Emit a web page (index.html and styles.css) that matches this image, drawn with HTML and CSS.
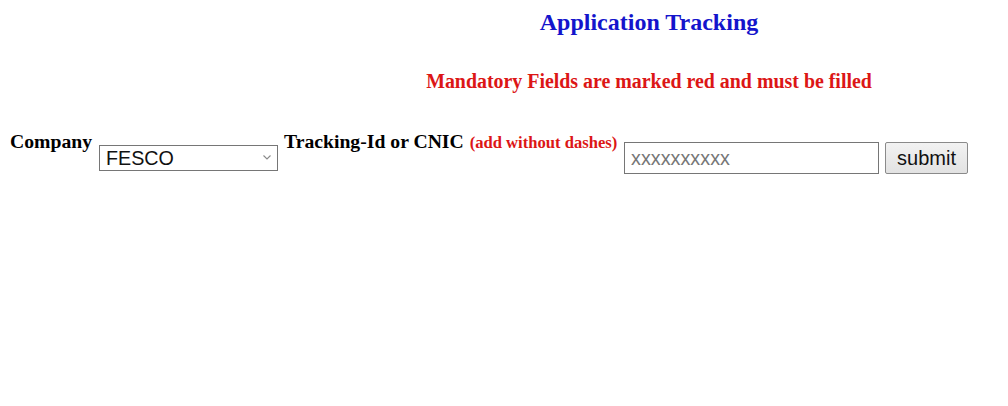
FILE: index.html
```html
<!DOCTYPE html>
<html>
<head>
<meta charset="utf-8">
<title>Application Tracking</title>
<link rel="stylesheet" href="styles.css">
</head>
<body>
<div class="page">
  <header class="head">
    <h2 class="title">Application Tracking</h2>
    <h3 class="notice">Mandatory Fields are marked red and must be filled</h3>
  </header>
  <form class="row">
    <label class="label label-company">Company</label>
    <div class="select-wrap">
      <select class="select">
        <option>FESCO</option>
      </select>
      <svg class="chev" width="8" height="5" viewBox="0 0 8 5"><path d="M0.5 0.5 L4 4 L7.5 0.5" fill="none" stroke="#8a8a8a" stroke-width="1.1"/></svg>
    </div>
    <label class="label label-track">Tracking-Id or CNIC <span class="hint">(add without dashes)</span></label>
    <input class="field" type="text" placeholder="xxxxxxxxxx">
    <button class="btn" type="button">submit</button>
  </form>
</div>
</body>
</html>
```

FILE: styles.css
```css
html, body {
  margin: 0;
  padding: 0;
  background: #ffffff;
}
body {
  font-family: "Liberation Serif", "Times New Roman", serif;
  color: #000;
}
.page {
  width: 1008px;
}
.head {
  padding-left: 290px;
  text-align: center;
}
.title {
  margin: 0;
  padding-top: 9px;
  font-size: 24px;
  font-weight: bold;
  line-height: 27px;
  color: #1414cc;
}
.notice {
  margin: 34px 0 0 0;
  font-size: 19.9px;
  font-weight: bold;
  line-height: 22px;
  color: #dc1616;
}
.row {
  display: flex;
  align-items: flex-start;
  margin: 38px 0 0 10px;
}
.label {
  font-size: 19.7px;
  font-weight: bold;
  line-height: 22px;
  white-space: nowrap;
}
.label-company {
  width: 82px;
}
.label-track {
  width: 333px;
}
.hint {
  margin-left: 1px;
  font-size: 16.6px;
  color: #dc1616;
}
.select-wrap {
  position: relative;
  margin: 15px 6px 0 7px;
}
.select {
  appearance: none;
  -webkit-appearance: none;
  display: block;
  width: 179px;
  height: 26px;
  box-sizing: border-box;
  margin: 0;
  padding: 0 0 0 6px;
  border: 1px solid #767676;
  border-radius: 0;
  background: #fff;
  font-family: "Liberation Sans", Arial, sans-serif;
  font-size: 19.7px;
  line-height: 24px;
  color: #111;
}
.chev {
  position: absolute;
  left: 164px;
  top: 10px;
}
.field {
  display: block;
  box-sizing: border-box;
  width: 255px;
  height: 32px;
  margin: 12px 0 0 7px;
  padding: 0 6px;
  border: 1px solid #767676;
  border-radius: 0;
  font-family: "Liberation Sans", Arial, sans-serif;
  font-size: 19.8px;
  color: #000;
  background: #fff;
}
.field::placeholder {
  color: #777;
}
.btn {
  display: block;
  box-sizing: border-box;
  width: 83px;
  height: 32px;
  margin: 12px 0 0 6px;
  padding: 0;
  border: 1px solid #8a8a8a;
  border-radius: 2px;
  background: linear-gradient(#f2f2f2, #e2e2e2);
  font-family: "Liberation Sans", Arial, sans-serif;
  font-size: 20px;
  color: #111;
}
```
